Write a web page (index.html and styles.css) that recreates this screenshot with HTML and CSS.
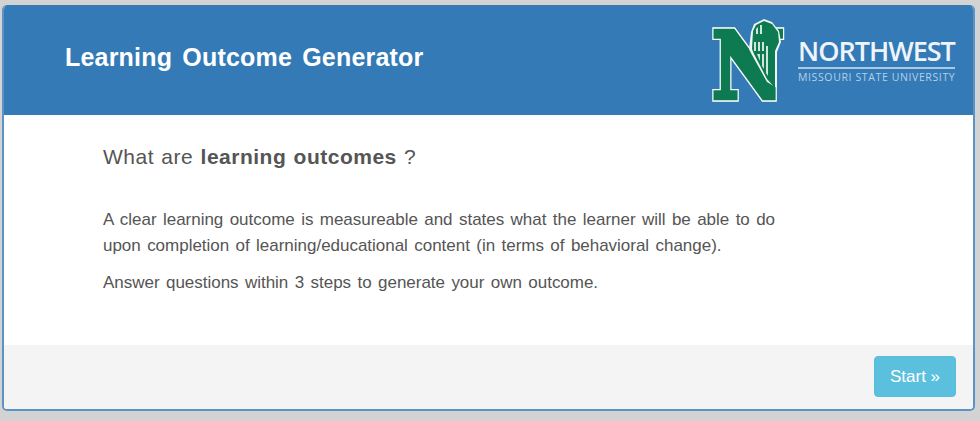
FILE: index.html
```html
<!DOCTYPE html>
<html lang="en">
<head>
<meta charset="utf-8">
<title>Learning Outcome Generator</title>
<link rel="stylesheet" href="styles.css">
</head>
<body>
<main class="panel">
  <header class="panel-head">
    <h1 class="title">Learning Outcome Generator</h1>
    <div class="logo">
      <svg class="logo-mark" width="74" height="90" viewBox="0 0 74 90" aria-hidden="true">
        <text class="logo-n logo-n-edge" transform="translate(38 82) scale(0.79 0.92)" text-anchor="middle">N</text>
        <text class="logo-n" transform="translate(38 82) scale(0.79 0.92)" text-anchor="middle">N</text>
        <path class="tower-edge" d="M41 16 L44 8 L54 3 L62 6 L69 15 L71 26 L67 36 L67 72 L57 66 L42 39 L39 33 Z"/>
        <path class="tower" d="M43 15 L46 9 L54 5 L62 8 L68 16 L69 26 L65 35 L65 72 L57 63 L44 38 L42 33 Z"/>
        <path class="tower-light" d="M46 13 L48 11 L48 18 L46 18 Z M50 9 L52 9 L52 18 L50 18 Z M44 26 H46 V35 H44 Z M48 26 H50 V35 H48 Z M52 26 H54 V35 H52 Z M47 38 H50 L50 45 Z M52 38 H54 V53 L52 50 Z M56 30 H58 V60 L56 57 Z"/>
      </svg>
      <div class="wordmark">
        <span class="wm-name">NORTHWEST</span>
        <span class="wm-sub">MISSOURI STATE UNIVERSITY</span>
      </div>
    </div>
  </header>
  <section class="panel-body">
    <h2 class="question">What are <b>learning outcomes</b> ?</h2>
    <p class="lead">A clear learning outcome is measureable and states what the learner will be able to do upon completion of learning/educational content (in terms of behavioral change).</p>
    <p class="note">Answer questions within 3 steps to generate your own outcome.</p>
  </section>
  <footer class="panel-foot">
    <button class="start" type="button">Start »</button>
  </footer>
</main>
</body>
</html>
```
FILE: styles.css
```css
* { box-sizing: border-box; }
html, body { height: 100%; }
body {
  margin: 0;
  padding: 5px 5px 10px 2px;
  background: #d3d3d3;
  font-family: "Liberation Sans", Arial, sans-serif;
  color: #555;
}
.panel {
  height: 406px;
  display: flex;
  flex-direction: column;
  background: #fff;
  border: 2px solid #5b93c6;
  border-top: 0;
  border-radius: 5px;
  overflow: hidden;
}
.panel-head {
  height: 110px;
  flex: none;
  display: flex;
  align-items: center;
  justify-content: space-between;
  padding: 0 18px 0 61px;
  background: #337ab7;
  color: #fff;
}
.title {
  margin: 0 0 6px;
  font-size: 25px;
  font-weight: 700;
  letter-spacing: 0.2px;
  word-spacing: 3px;
}
.logo { display: flex; align-items: center; gap: 14px; }
.logo-mark { display: block; margin-top: 2px; overflow: visible; }
.logo-n {
  font-family: "DejaVu Serif", serif;
  font-weight: 700;
  font-size: 100px;
  fill: #0d7a52;
  stroke: #0d7a52;
  stroke-width: 5px;
}
.logo-n-edge {
  fill: #fff;
  stroke: #fff;
  stroke-width: 8px;
}
.tower { fill: #0d7a52; }
.tower-edge { fill: #eef6f1; }
.tower-light { fill: #cfe6da; }
.wordmark { display: flex; flex-direction: column; width: 157px; color: #eef4fa; margin-bottom: 2px; }
.wm-name {
  font-family: "Open Sans", sans-serif;
  font-weight: 600;
  font-size: 27px;
  line-height: 33px;
  letter-spacing: -1px;
  white-space: nowrap;
  border-bottom: 2px solid #a9c9e4;
}
.wm-sub {
  font-family: "Open Sans", sans-serif;
  font-size: 10.5px;
  line-height: 16px;
  letter-spacing: 0.62px;
  color: #b5d0e8;
  white-space: nowrap;
}
.panel-body {
  flex: 1;
  padding: 28px 195px 0 99px;
}
.question {
  margin: 0 0 36px;
  font-size: 21px;
  font-weight: 400;
  line-height: 28px;
  letter-spacing: 0.5px;
  word-spacing: 1px;
}
.question b { font-weight: 700; }
.lead, .note {
  margin: 0 0 11px;
  font-size: 17px;
  line-height: 26px;
  letter-spacing: -0.02px;
  word-spacing: 1.7px;
}
.panel-foot {
  height: 64px;
  flex: none;
  display: flex;
  justify-content: flex-end;
  align-items: flex-start;
  padding: 11px 17px 0 0;
  background: #f4f4f4;
}
.start {
  width: 82px;
  height: 41px;
  border: 1px solid #57bddb;
  border-radius: 4px;
  background: #5bc0de;
  color: #fff;
  font: 17px "Liberation Sans", Arial, sans-serif;
}
```
